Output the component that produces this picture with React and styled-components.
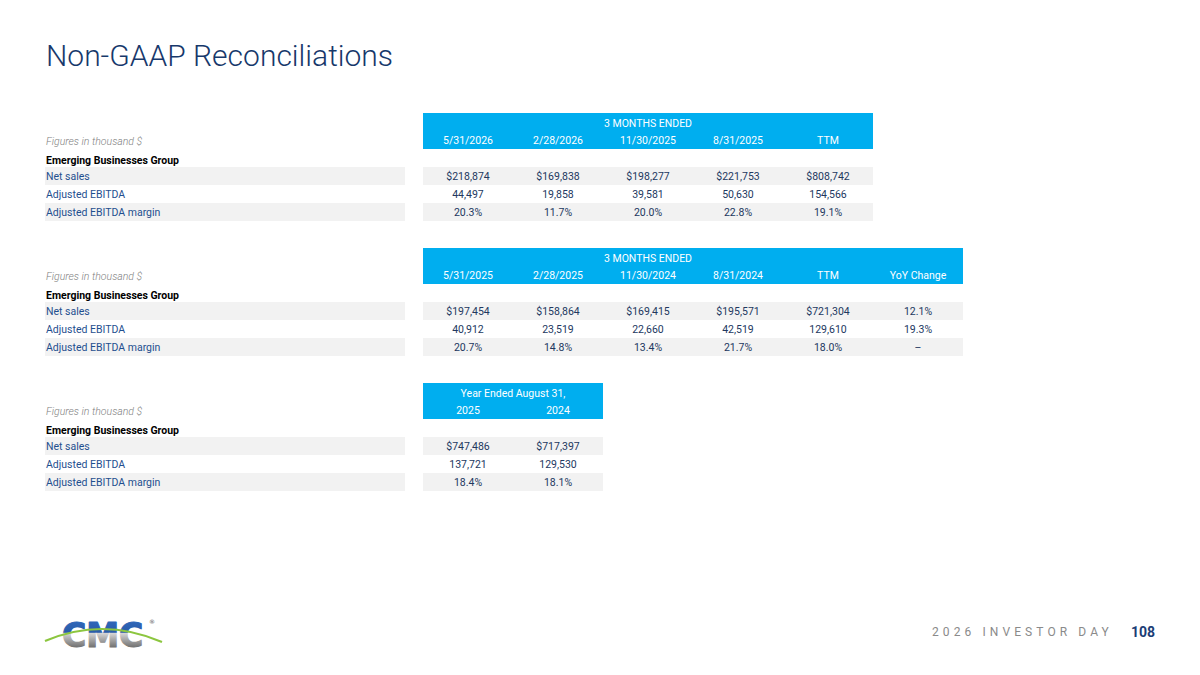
import React from "react";
import styled, { createGlobalStyle } from "styled-components";

const GlobalStyle = createGlobalStyle`
  html, body {
    margin: 0;
    padding: 0;
    background: #ffffff;
  }
  body {
    font-family: Roboto, "Liberation Sans", sans-serif;
  }
`;

const Slide = styled.main`
  width: 1200px;
  height: 675px;
  box-sizing: border-box;
  padding: 34px 45px 22px 45px;
  display: flex;
  flex-direction: column;
  overflow: hidden;
`;

const Title = styled.h1`
  margin: 0 0 0 1px;
  font-size: 30px;
  font-weight: 300;
  line-height: 44px;
  color: #17386b;
`;

const Tables = styled.div`
  margin-top: 35px;
  display: flex;
  flex-direction: column;
  gap: 27px;
`;

const Row = styled.div`
  display: grid;
  grid-template-columns: 360px 18px repeat(${(p) => p.$cols}, 90px);
  grid-template-rows: 18px;
  height: 18px;
  font-size: 10.5px;
  line-height: 16px;
`;

const Label = styled.div`
  padding-left: 1px;
  padding-top: 2px;
  box-sizing: border-box;
  color: #1f4f8f;
  background: ${(p) => (p.$shaded ? "#f2f2f2" : "transparent")};
  white-space: nowrap;
`;

const Note = styled.div`
  padding-left: 1px;
  padding-top: 3px;
  color: #808080;
  font-style: italic;
  font-weight: 300;
  white-space: nowrap;
`;

const Group = styled.div`
  padding-left: 1px;
  padding-top: 4px;
  color: #000000;
  font-weight: 700;
  white-space: nowrap;
`;

const Gap = styled.div``;

const Head = styled.div`
  background: #00aeef;
  color: #ffffff;
  text-align: center;
  white-space: nowrap;
  box-sizing: border-box;
  padding-top: ${(p) => (p.$top ? "3px" : "2px")};
  grid-column: ${(p) => (p.$span ? `span ${p.$span}` : "auto")};
`;

const Cell = styled.div`
  text-align: center;
  padding-top: 2px;
  box-sizing: border-box;
  color: #22385f;
  background: ${(p) => (p.$shaded ? "#f2f2f2" : "transparent")};
  white-space: nowrap;
`;

const Footer = styled.footer`
  margin-top: auto;
  display: flex;
  align-items: center;
  justify-content: space-between;
`;

const Brand = styled.div`
  display: flex;
  align-items: center;
`;

const EventName = styled.div`
  display: flex;
  align-items: center;
  gap: 18px;
  padding-bottom: 2px;
`;

const EventText = styled.span`
  font-size: 12px;
  letter-spacing: 4.1px;
  color: #8a8a8a;
`;

const PageNum = styled.span`
  font-size: 14px;
  font-weight: 700;
  color: #1b3d75;
`;

const rowLabels = ["Net sales", "Adjusted EBITDA", "Adjusted EBITDA margin"];

const tables = [
  {
    title: "3 MONTHS ENDED",
    span: 5,
    heads: ["5/31/2026", "2/28/2026", "11/30/2025", "8/31/2025", "TTM"],
    rows: [
      ["$218,874", "$169,838", "$198,277", "$221,753", "$808,742"],
      ["44,497", "19,858", "39,581", "50,630", "154,566"],
      ["20.3%", "11.7%", "20.0%", "22.8%", "19.1%"],
    ],
  },
  {
    title: "3 MONTHS ENDED",
    span: 5,
    heads: ["5/31/2025", "2/28/2025", "11/30/2024", "8/31/2024", "TTM", "YoY Change"],
    rows: [
      ["$197,454", "$158,864", "$169,415", "$195,571", "$721,304", "12.1%"],
      ["40,912", "23,519", "22,660", "42,519", "129,610", "19.3%"],
      ["20.7%", "14.8%", "13.4%", "21.7%", "18.0%", "–"],
    ],
  },
  {
    title: "Year Ended August 31,",
    span: 2,
    heads: ["2025", "2024"],
    rows: [
      ["$747,486", "$717,397"],
      ["137,721", "129,530"],
      ["18.4%", "18.1%"],
    ],
  },
];

const Reconciliation = ({ table }) => {
  const cols = table.heads.length;
  const extra = cols - table.span;
  return (
    <section>
      <Row $cols={cols}>
        <Gap />
        <Gap />
        <Head $span={table.span} $top>
          {table.title}
        </Head>
        {Array.from({ length: extra }).map((_, i) => (
          <Head key={i} $top />
        ))}
      </Row>
      <Row $cols={cols}>
        <Note>Figures in thousand $</Note>
        <Gap />
        {table.heads.map((h) => (
          <Head key={h}>{h}</Head>
        ))}
      </Row>
      <Row $cols={cols}>
        <Group>Emerging Businesses Group</Group>
      </Row>
      {table.rows.map((vals, i) => (
        <Row key={i} $cols={cols}>
          <Label $shaded={i !== 1}>{rowLabels[i]}</Label>
          <Gap />
          {vals.map((v, j) => (
            <Cell key={j} $shaded={i !== 1}>
              {v}
            </Cell>
          ))}
        </Row>
      ))}
    </section>
  );
};

// CMC mark: blue above the green swoosh, brushed grey below it
const Logo = () => (
  <svg width="122" height="40" viewBox="0 0 122 40" overflow="visible">
    <defs>
      <linearGradient id="cmcFill" x1="0" y1="9" x2="0" y2="35" gradientUnits="userSpaceOnUse">
        <stop offset="0" stopColor="#2f66b8" />
        <stop offset="0.4" stopColor="#2a5ba8" />
        <stop offset="0.42" stopColor="#d8d8d8" />
        <stop offset="0.7" stopColor="#a2a2a2" />
        <stop offset="1" stopColor="#6c6c6c" />
      </linearGradient>
    </defs>
    <text
      x="17"
      y="34"
      fontFamily="'DejaVu Sans', sans-serif"
      fontWeight="700"
      fontSize="33"
      fill="url(#cmcFill)"
      stroke="url(#cmcFill)"
      strokeWidth="1.2"
      strokeLinejoin="round"
    >
      CMC
    </text>
    <path d="M0 28 Q58 3.5 117 29" fill="none" stroke="#8cc63f" strokeWidth="2.2" />
    <text x="104" y="11" fontSize="6" fill="#555" fontFamily="'DejaVu Sans', sans-serif">
      ®
    </text>
  </svg>
);

export default function App() {
  return (
    <>
      <GlobalStyle />
      <Slide>
        <Title>Non-GAAP Reconciliations</Title>
        <Tables>
          {tables.map((t, i) => (
            <Reconciliation key={i} table={t} />
          ))}
        </Tables>
        <Footer>
          <Brand>
            <Logo />
          </Brand>
          <EventName>
            <EventText>2026 INVESTOR DAY</EventText>
            <PageNum>108</PageNum>
          </EventName>
        </Footer>
      </Slide>
    </>
  );
}
